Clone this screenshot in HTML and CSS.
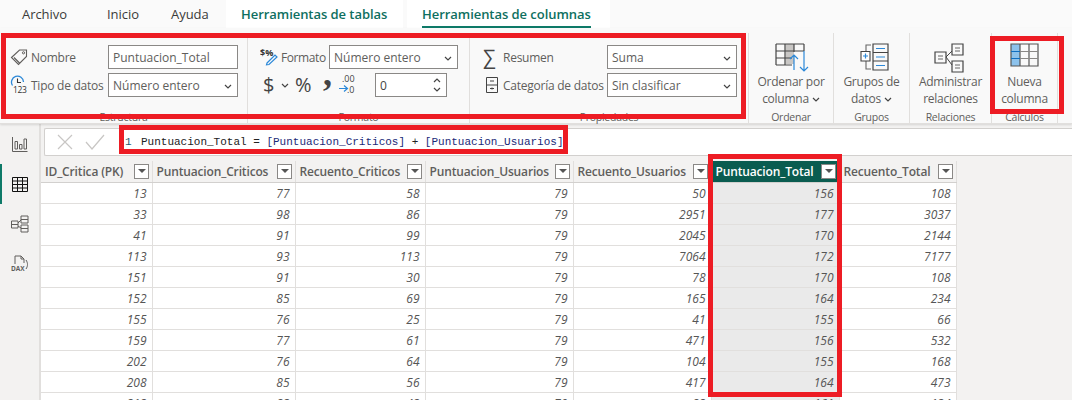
FILE: index.html
```html
<!DOCTYPE html>
<html>
    <head>
        <meta charset="UTF-8">
        <title>Herramientas de columnas</title>
        <link rel="stylesheet" href="styles.css">
    </head>
    <body>
        <!-- pestañas -->
        <div class="tabs">
            <span class="tab t-archivo">Archivo</span>
            <span class="tab t-inicio">Inicio</span>
            <span class="tab t-ayuda">Ayuda</span>
            <span class="tab tab-ctx t-tablas">Herramientas de tablas</span>
            <span class="tab tab-ctx t-columnas"><span class="tab-on">Herramientas de columnas</span></span>
        </div>

        <!-- cinta -->
        <div class="ribbon">
            <div class="group g-estructura">
                <div class="fields">
                    <svg class="ico" viewBox="0 0 18 18"><path d="M1.5 9.5 9.5 2H16.500V8.500L8.500 16.500Z M4 9.500 9.500 15" fill="none" stroke="#605e5c" stroke-width="1.100"/><circle cx="13.500" cy="4.800" r="1.100" fill="none" stroke="#605e5c"/></svg>
                    <span class="lbl">Nombre</span>
                    <div class="box">Puntuacion_Total</div>
                    <svg class="ico ico-tall" viewBox="0 0 18 20"><path d="M2.500 10.500A6 6 0 1 1 13.500 7" fill="none" stroke="#2b88d8" stroke-width="1.300"/><path d="M7.500 3.500V7.500H11" fill="none" stroke="#333" stroke-width="1.100"/><text x="3" y="17.500" class="ico-num">123</text></svg>
                    <span class="lbl">Tipo de datos</span>
                    <div class="box box-sel">Número entero<svg class="chev" viewBox="0 0 8 5"><path d="M1 1 4 4 7 1"/></svg></div>
                </div>
                <div class="g-name">Estructura</div>
            </div>
            <div class="group g-formato">
                <div class="fields">
                    <svg class="ico ico-fmt" viewBox="0 0 18 20"><text x="0" y="10" class="ico-bold">$%</text><path d="M7 17 15 9 17 11 9 18.500 6.500 18.800Z" fill="none" stroke="#2b88d8" stroke-width="1.200"/></svg>
                    <span class="lbl">Formato</span>
                    <div class="box box-sel">Número entero<svg class="chev" viewBox="0 0 8 5"><path d="M1 1 4 4 7 1"/></svg></div>
                </div>
                <div class="numfmt">
                    <span class="nf nf-dollar">$</span>
                    <svg class="chev nf-chev" viewBox="0 0 8 5"><path d="M1 1 4 4 7 1"/></svg>
                    <span class="nf nf-pct">%</span>
                    <span class="nf nf-comma">,</span>
                    <svg class="nf-dec" viewBox="0 0 18 20"><text x="3" y="7" class="ico-dec">.00</text><text x="8" y="18" class="ico-dec">.0</text><path d="M0 13.500H8M5 10.500 8.500 13.500 5 16.500" fill="none" stroke="#2b88d8" stroke-width="1.200"/></svg>
                    <div class="box box-spin">0<span class="spin"><svg class="chev" viewBox="0 0 8 5"><path d="M1 4 4 1 7 4"/></svg><svg class="chev" viewBox="0 0 8 5"><path d="M1 1 4 4 7 1"/></svg></span></div>
                </div>
                <div class="g-name">Formato</div>
            </div>
            <div class="group g-props">
                <div class="fields">
                    <span class="sigma">∑</span>
                    <span class="lbl">Resumen</span>
                    <div class="box box-sel">Suma<svg class="chev" viewBox="0 0 8 5"><path d="M1 1 4 4 7 1"/></svg></div>
                    <svg class="ico" viewBox="0 0 18 18"><path d="M3.500 1.500H14.500V16.500H3.500Z M3.500 9H14.500 M7 5H11 M7 12.500H11 M9 11.500V13.500" fill="none" stroke="#444" stroke-width="1"/></svg>
                    <span class="lbl">Categoría de datos</span>
                    <div class="box box-sel">Sin clasificar<svg class="chev" viewBox="0 0 8 5"><path d="M1 1 4 4 7 1"/></svg></div>
                </div>
                <div class="g-name">Propiedades</div>
            </div>
            <div class="group g-big g-ordenar">
                <svg class="big-ico" viewBox="0 0 36 30"><path d="M12.500 1H21V21H12.500Z" fill="#c8c6c4"/><path d="M3 1H31M3 8H31M3 15H19M3 22H19M3 1V22M12 1V22M21 1V9M31 1V8" fill="none" stroke="#444" stroke-width="1.200"/><path d="M21 27V12M17 16 21 12 25 16M31 8V28M27 24 31 28 35 24" fill="none" stroke="#2b88d8" stroke-width="1.200"/></svg>
                <div class="big-txt">Ordenar por<br>columna<svg class="chev chev-in" viewBox="0 0 8 5"><path d="M1 1 4 4 7 1"/></svg></div>
                <div class="g-name">Ordenar</div>
            </div>
            <div class="group g-big g-grupos">
                <svg class="big-ico" viewBox="0 0 36 30"><path d="M12 8V2H17M12 18V26H17" fill="none" stroke="#666" stroke-width="1.100"/><path d="M7 8.500H16V18H7Z" fill="#fff" stroke="#444" stroke-width="1.100"/><path d="M9 13H14M11.500 10.500V15.500" stroke="#2b88d8" stroke-width="1.200"/><path d="M19 1H34V27H19ZM19 9.500H34M19 18H34" fill="none" stroke="#444" stroke-width="1.200"/><path d="M22 5.500H31M22 14H31M22 22.500H31" stroke="#2b88d8" stroke-width="1.200"/></svg>
                <div class="big-txt">Grupos de<br>datos<svg class="chev chev-in" viewBox="0 0 8 5"><path d="M1 1 4 4 7 1"/></svg></div>
                <div class="g-name">Grupos</div>
            </div>
            <div class="group g-big g-rel">
                <svg class="big-ico" viewBox="0 0 36 30"><path d="M2 9H13V20H2ZM19 1H30V12H19ZM19 18H30V29H19Z" fill="none" stroke="#444" stroke-width="1.200"/><path d="M5 13H10M5 16H10M22 5H27M22 8H27M22 22H27M22 25H27" stroke="#666"/><path d="M13 14 19 8M13 14 19 22" fill="none" stroke="#444"/></svg>
                <div class="big-txt">Administrar<br>relaciones</div>
                <div class="g-name">Relaciones</div>
            </div>
            <div class="group g-big g-calc">
                <svg class="big-ico" viewBox="0 0 36 30"><path d="M4 1H13V23H4Z" fill="#8cc2ec"/><path d="M4 1H31V23H4ZM13 1V23M22 1V23" fill="none" stroke="#555" stroke-width="1.200"/><path d="M4 8.500H31M4 15.500H31" fill="none" stroke="#8a8886" stroke-width="1.100"/><path d="M4 8.500H13M4 15.500H13" stroke="#106ebe" stroke-width="1.200"/></svg>
                <div class="big-txt">Nueva<br>columna</div>
                <div class="g-name">Cálculos</div>
            </div>
        </div>

        <div class="main">
            <!-- barra lateral -->
            <div class="rail">
                <div class="rail-item">
                    <svg class="rail-ico" viewBox="0 0 18 18"><path d="M1.500 2V16.500H16.500M4 6.500H6.500V14H4ZM8.500 9.500H11V14H8.500ZM13 4H15.500V14H13Z" fill="none" stroke="#605e5c"/></svg>
                </div>
                <div class="rail-item rail-on">
                    <svg class="rail-ico" viewBox="0 0 18 18"><path d="M1.500 2.500H16.500V16.500H1.500ZM1.500 6H16.500M1.500 9.500H16.500M1.500 13H16.500M6.500 2.500V16.500M11.500 2.500V16.500" fill="none" stroke="#111"/></svg>
                </div>
                <div class="rail-item">
                    <svg class="rail-ico" viewBox="0 0 18 18"><path d="M.5 6H7V13H.5ZM.5 9.500H7M10 1H17V8H10ZM10 4.500H17M10 10H17V17H10ZM10 13.500H17M7 8 10 5M7 11 10 13" fill="none" stroke="#605e5c"/></svg>
                </div>
                <div class="rail-item">
                    <svg class="rail-ico" viewBox="0 0 18 18"><path d="M4 9V1H10L13 4V8M10 1V4H13M15 5C17 8 17 11 15 14" fill="none" stroke="#605e5c"/><text x="0" y="16" class="dax">DAX</text></svg>
                </div>
            </div>

            <div class="content">
                <div class="formula">
                    <div class="fx-btns">
                        <svg class="fx-ico" viewBox="0 0 16 16"><path d="M1 1 15 15M15 1 1 15"/></svg>
                        <svg class="fx-ico fx-ok" viewBox="0 0 20 16"><path d="M1 8 7 15 19 1"/></svg>
                    </div>
                    <div class="fx-code"><span class="ln">1</span>Puntuacion_Total = <span class="br">[Puntuacion_Criticos]</span> + <span class="br">[Puntuacion_Usuarios]</span></div>
                </div>

                <table class="grid">
                    <colgroup>
                        <col class="c1"><col class="c2"><col class="c3"><col class="c4"><col class="c5"><col class="c6"><col class="c7">
                    </colgroup>
                    <thead>
                        <tr>
                            <th>ID_Critica (PK)<span class="flt"></span></th>
                            <th>Puntuacion_Criticos<span class="flt"></span></th>
                            <th>Recuento_Criticos<span class="flt"></span></th>
                            <th>Puntuacion_Usuarios<span class="flt"></span></th>
                            <th>Recuento_Usuarios<span class="flt"></span></th>
                            <th class="sel">Puntuacion_Total<span class="flt"></span></th>
                            <th>Recuento_Total<span class="flt"></span></th>
                        </tr>
                    </thead>
                    <tbody>
                        <tr><td>13</td><td>77</td><td>58</td><td>79</td><td>50</td><td class="sel">156</td><td>108</td></tr>
                        <tr><td>33</td><td>98</td><td>86</td><td>79</td><td>2951</td><td class="sel">177</td><td>3037</td></tr>
                        <tr><td>41</td><td>91</td><td>99</td><td>79</td><td>2045</td><td class="sel">170</td><td>2144</td></tr>
                        <tr><td>113</td><td>93</td><td>113</td><td>79</td><td>7064</td><td class="sel">172</td><td>7177</td></tr>
                        <tr><td>151</td><td>91</td><td>30</td><td>79</td><td>78</td><td class="sel">170</td><td>108</td></tr>
                        <tr><td>152</td><td>85</td><td>69</td><td>79</td><td>165</td><td class="sel">164</td><td>234</td></tr>
                        <tr><td>155</td><td>76</td><td>25</td><td>79</td><td>41</td><td class="sel">155</td><td>66</td></tr>
                        <tr><td>159</td><td>77</td><td>61</td><td>79</td><td>471</td><td class="sel">156</td><td>532</td></tr>
                        <tr><td>202</td><td>76</td><td>64</td><td>79</td><td>104</td><td class="sel">155</td><td>168</td></tr>
                        <tr><td>208</td><td>85</td><td>56</td><td>79</td><td>417</td><td class="sel">164</td><td>473</td></tr>
                        <tr><td>212</td><td>83</td><td>42</td><td>79</td><td>82</td><td class="sel">161</td><td>124</td></tr>
                    </tbody>
                </table>
            </div>
        </div>

        <!-- recuadros rojos sobre la captura -->
        <div class="mark m-cinta"></div>
        <div class="mark m-nueva"></div>
        <div class="mark m-formula"></div>
        <div class="mark m-columna"></div>
    </body>
</html>
```

FILE: styles.css
```css
*{
    margin: 0;
    padding: 0;
    box-sizing: border-box;
}
html, body{
    height: 400px;
    overflow: hidden;
}
body{
    position: relative;
    background-color: #f3f2f1;
    font-family: "Open Sans", "Liberation Sans", sans-serif;
    font-size: 12px;
    letter-spacing: -0.25px;
    color: #605e5c;
}

/* pestañas */
.tabs{
    display: flex;
    height: 28px;
    background-color: #fafafa;
    font-size: 13px;
    letter-spacing: -0.05px;
}
.tab{
    color: #3b3a39;
    line-height: 28px;
}
.t-archivo{
    margin-left: 22px;
    width: 85px;
}
.t-inicio{
    width: 64px;
}
.t-ayuda{
    width: 55px;
}
.tab-ctx{
    background-color: #fff;
    color: #0e6f60;
    font-weight: 600;
}
.t-tablas{
    width: 177px;
    padding-left: 15px;
}
.t-columnas{
    width: 203px;
    margin-left: 4px;
    padding-left: 15px;
}
.tab-on{
    display: inline-block;
    height: 28px;
    border-bottom: 2px solid #0e7a68;
}

/* cinta */
.ribbon{
    display: flex;
    height: 96px;
    background-color: #f9f9f9;
    border-bottom: 1px solid #e1dfdd;
    box-shadow: 0 1px 2px rgba(0,0,0,.12);
    position: relative;
}
.group{
    position: relative;
    display: flex;
    flex-direction: column;
    margin-top: 5px;
    padding-top: 12px;
    border-right: 1px solid #e1dfdd;
}
.g-estructura{
    width: 248px;
    padding-left: 10px;
}
.g-formato{
    width: 222px;
    padding-left: 12px;
}
.g-props{
    width: 279px;
    padding-left: 13px;
}
.g-ordenar{
    width: 85px;
}
.g-grupos{
    width: 76px;
}
.g-rel{
    width: 82px;
}
.g-calc{
    width: 66px;
    border-right: 1px solid #e1dfdd;
}
.g-name{
    position: absolute;
    left: 0;
    right: 0;
    bottom: -1px;
    text-align: center;
    font-size: 10.500px;
    line-height: 14px;
}
.fields{
    display: grid;
    grid-auto-rows: 24px;
    row-gap: 4px;
    align-items: center;
}
.g-estructura .fields{
    grid-template-columns: 21px 77px 130px;
}
.g-formato .fields{
    grid-template-columns: 21px 48px 129px;
}
.g-props .fields{
    grid-template-columns: 20px 104px 130px;
}
.ico{
    width: 18px;
    height: 18px;
}
.ico-tall{
    height: 20px;
}
.ico-fmt{
    height: 20px;
    margin-top: -3px;
}
.ico-num{
    font-size: 8.500px;
    fill: #333;
    letter-spacing: -0.3px;
}
.ico-dec{
    font-size: 9px;
    fill: #444;
    letter-spacing: 0;
}
.ico-bold{
    font-size: 9px;
    font-weight: 700;
    fill: #333;
    letter-spacing: 0;
}
.sigma{
    font-size: 20px;
    line-height: 24px;
    color: #444;
}
.lbl{
    white-space: nowrap;
    padding-top: 1px;
}
.g-formato .lbl{
    letter-spacing: -0.4px;
}
.box{
    height: 24px;
    line-height: 23px;
    padding-left: 4px;
    background-color: #fff;
    border: 1px solid #8a8886;
    position: relative;
    letter-spacing: 0;
}
.chev{
    width: 8px;
    height: 5px;
    fill: none;
    stroke: #444;
    stroke-width: 1.200;
}
.box-sel .chev{
    position: absolute;
    right: 5px;
    top: 10px;
}
.chev-in{
    margin-left: 3px;
    vertical-align: 1px;
}
.numfmt{
    display: flex;
    align-items: center;
    height: 24px;
    margin-top: 4px;
    color: #444;
}
.nf{
    line-height: 24px;
}
.nf-dollar{
    width: 18px;
    margin-left: 3px;
    font-size: 20px;
    letter-spacing: 0;
}
.nf-chev{
    margin-right: 6px;
}
.nf-pct{
    width: 28px;
    font-size: 20px;
    letter-spacing: 0;
}
.nf-comma{
    width: 16px;
    height: 24px;
    font-family: "Liberation Serif", serif;
    font-size: 36px;
    font-weight: 700;
    line-height: 1px;
}
.nf-dec{
    width: 18px;
    height: 20px;
    margin-right: 18px;
    overflow: visible;
}
.box-spin{
    width: 72px;
    padding-left: 4px;
}
.spin{
    position: absolute;
    right: 5px;
    top: 4px;
    display: flex;
    flex-direction: column;
    row-gap: 4px;
}
.g-big{
    align-items: center;
    padding-top: 10px;
    line-height: 17px;
}
.big-ico{
    width: 36px;
    height: 30px;
}
.big-txt{
    text-align: center;
}

/* zona inferior */
.main{
    display: flex;
    height: 276px;
}
.rail{
    width: 41px;
    flex-shrink: 0;
    border-right: 2px solid #e1dfdd;
}
.rail-item{
    display: flex;
    align-items: center;
    justify-content: center;
    height: 40px;
}
.rail-on{
    border-left: 2px solid #0e7a68;
    padding-right: 2px;
}
.rail-ico{
    width: 18px;
    height: 18px;
}
.dax{
    font-size: 6.500px;
    font-weight: 700;
    fill: #605e5c;
    letter-spacing: 0;
}
.content{
    flex: 1;
    min-width: 0;
}
.formula{
    display: flex;
    align-items: center;
    height: 28px;
    margin: 4px 0 5px 3px;
    background-color: #fff;
    border: 1px solid #d2d0ce;
    border-right: 0;
    border-radius: 2px 0 0 2px;
}
.fx-btns{
    display: flex;
    align-items: center;
    column-gap: 12px;
    width: 80px;
    padding-left: 12px;
}
.fx-ico{
    height: 16px;
    width: 16px;
    fill: none;
    stroke: #c8c6c4;
    stroke-width: 1.200;
}
.fx-ok{
    width: 20px;
}
.fx-code{
    font-family: "Liberation Mono", monospace;
    font-size: 11px;
    letter-spacing: 0;
    color: #222;
    white-space: pre;
}
.ln{
    display: inline-block;
    width: 16px;
    color: #1f5c70;
}
.br{
    color: #1b2a78;
}

/* tabla */
.grid{
    table-layout: fixed;
    width: 915px;
    border-collapse: collapse;
    background-color: #fff;
}
.c1{ width: 111px; }
.c2{ width: 143px; }
.c3{ width: 130px; }
.c4{ width: 148px; }
.c5{ width: 138px; }
.c6{ width: 128px; }
.c7{ width: 117px; }
.grid th{
    position: relative;
    height: 21px;
    padding-left: 4px;
    text-align: left;
    font-weight: 600;
    letter-spacing: -0.15px;
    white-space: nowrap;
    background-color: #f3f2f1;
    border-right: 1px solid #e1dfdd;
    border-bottom: 1px solid #d2d0ce;
}
.grid td{
    height: 21px;
    padding: 1px 5px 0 0;
    text-align: right;
    font-style: italic;
    letter-spacing: 0;
    color: #555;
    border-right: 1px solid #e1dfdd;
    border-bottom: 1px solid #e1dfdd;
}
.grid th.sel{
    background-color: #0a5c50;
    color: #fff;
}
.grid td.sel{
    background-color: #eaeaea;
}
.flt{
    position: absolute;
    right: 3px;
    top: 3px;
    width: 15px;
    height: 15px;
    background-color: #fff;
    border: 1px solid #8a8886;
}
.flt::after{
    content: "";
    position: absolute;
    left: 3px;
    top: 4px;
    border-left: 4px solid transparent;
    border-right: 4px solid transparent;
    border-top: 4px solid #555;
}

/* recuadros rojos */
.mark{
    position: absolute;
    border: 5px solid #ed1c24;
}
.m-cinta{
    left: 1px;
    top: 33px;
    width: 745px;
    height: 86px;
}
.m-nueva{
    left: 990px;
    top: 36px;
    width: 74px;
    height: 78px;
}
.m-formula{
    left: 119px;
    top: 125px;
    width: 449px;
    height: 29px;
}
.m-columna{
    left: 708px;
    top: 154px;
    width: 134px;
    height: 243px;
}
```
